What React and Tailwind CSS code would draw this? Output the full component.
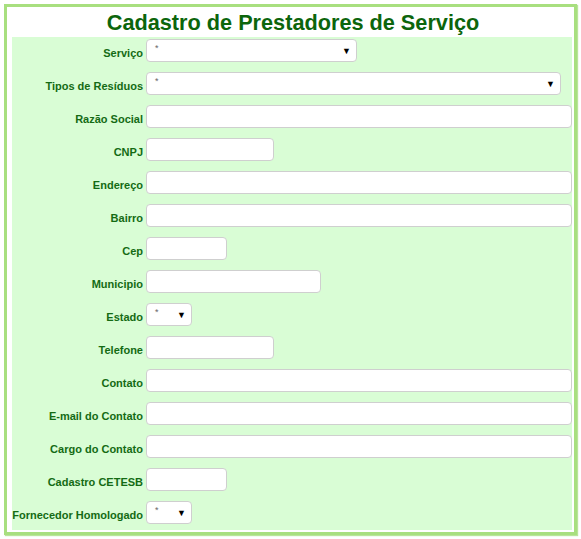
import React from "react";

const rows = [
  { label: "Serviço", type: "select", w: "w-[211px]" },
  { label: "Tipos de Resíduos", type: "select", w: "w-[415px]" },
  { label: "Razão Social", type: "input", w: "w-[426px]" },
  { label: "CNPJ", type: "input", w: "w-[128px]" },
  { label: "Endereço", type: "input", w: "w-[426px]" },
  { label: "Bairro", type: "input", w: "w-[426px]" },
  { label: "Cep", type: "input", w: "w-[81px]" },
  { label: "Municipio", type: "input", w: "w-[175px]" },
  { label: "Estado", type: "select", w: "w-[46px]" },
  { label: "Telefone", type: "input", w: "w-[128px]" },
  { label: "Contato", type: "input", w: "w-[426px]" },
  { label: "E-mail do Contato", type: "input", w: "w-[426px]" },
  { label: "Cargo do Contato", type: "input", w: "w-[426px]" },
  { label: "Cadastro CETESB", type: "input", w: "w-[81px]" },
  { label: "Fornecedor Homologado", type: "select", w: "w-[46px]" },
];

function Field({ type, w }) {
  if (type === "select") {
    return (
      <div
        className={`${w} h-[23px] bg-white border border-[#cfcfcf] rounded-[4px] flex items-start justify-between pl-[8px] pr-[5px]`}
      >
        <span className="text-[9px] leading-none text-[#666] mt-[4px]">*</span>
        <span className="text-[9px] leading-none text-black mt-[7px]">▼</span>
      </div>
    );
  }
  return (
    <input
      type="text"
      className={`${w} h-[23px] bg-white border border-[#cfcfcf] rounded-[4px] outline-none`}
    />
  );
}

export default function App() {
  return (
    <div className="w-[581px] h-[539px] bg-white pt-[4px] pl-[4px]" style={{ fontFamily: '"Liberation Sans", Arial, sans-serif' }}>
      <div className="w-[573px] h-[531px] border-[3px] border-[#a8df7f] bg-white shadow-[1px_1px_1px_#b9e59a] flex flex-col pl-[5px] pr-[2px] pb-[2px]">
        <div className="h-[30px] flex items-center justify-center">
          <h1 className="text-[21.7px] font-bold text-[#0c650c] leading-none mt-[1px] pl-[2px]">
            Cadastro de Prestadores de Serviço
          </h1>
        </div>
        <div className="flex-1 bg-[#d9fdd5] pt-[2px] flex flex-col gap-[10px]">
          {rows.map((r) => (
            <div key={r.label} className="flex items-end">
              <div className="w-[134px] pr-[3px] text-right text-[11px] font-bold text-[#146b14] leading-none pb-[3px] whitespace-nowrap">
                {r.label}
              </div>
              <Field type={r.type} w={r.w} />
            </div>
          ))}
        </div>
      </div>
    </div>
  );
}
